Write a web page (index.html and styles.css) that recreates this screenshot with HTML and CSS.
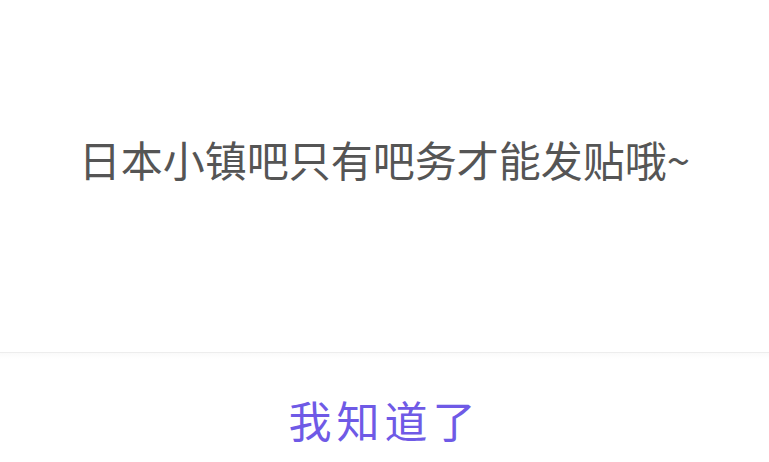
FILE: index.html
```html
<!DOCTYPE html>
<html lang="zh-CN">
<head>
<meta charset="utf-8">
<link rel="stylesheet" href="styles.css">
</head>
<body>
<div class="dialog">
  <div class="message">日本小镇吧只有吧务才能发贴哦~</div>
  <div class="actions">
    <div class="confirm">我知道了</div>
  </div>
</div>
</body>
</html>
```
FILE: styles.css
```css
html, body {
  margin: 0;
  padding: 0;
  background: #ffffff;
}
body {
  font-family: "Noto Sans CJK SC", "Noto Sans", sans-serif;
}
.dialog {
  width: 769px;
  height: 462px;
  overflow: hidden;
  display: flex;
  flex-direction: column;
}
.message {
  box-sizing: border-box;
  height: 353px;
  padding-top: 129px;
  text-align: center;
  font-size: 42px;
  line-height: 60px;
  color: #555555;
  border-bottom: 1px solid #ededed;
}
.actions {
  display: flex;
  justify-content: center;
  padding-top: 34px;
  background: linear-gradient(#fafafa, #ffffff 6px);
}
.confirm {
  font-size: 43px;
  line-height: 64px;
  letter-spacing: 5px;
  color: #6f5ae6;
}
```
